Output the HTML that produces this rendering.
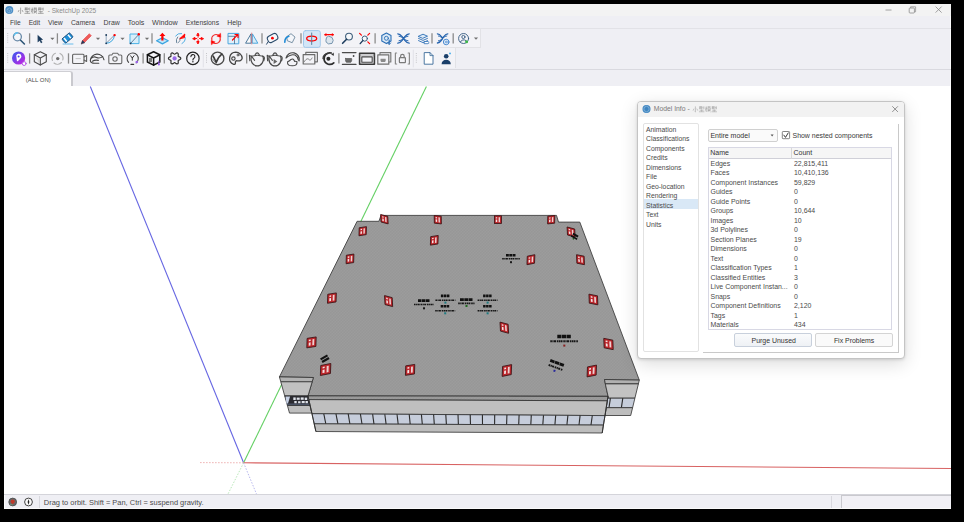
<!DOCTYPE html>
<html><head><meta charset="utf-8"><style>
*{margin:0;padding:0;box-sizing:border-box}
html,body{width:964px;height:522px;overflow:hidden;background:#000;font-family:"Liberation Sans",sans-serif}
.a{position:absolute}
.t{position:absolute;white-space:nowrap;line-height:1}
svg{position:absolute;left:0;top:0;overflow:visible}
</style></head><body>
<div class="a" style="left:4px;top:4px;width:947px;height:505px;background:#efeff4;border:1px solid #fbfbfb"></div>
<div class="a" style="left:4px;top:4px;width:947px;height:12px;background:#f3f3f3"></div>
<div class="a" style="left:4px;top:86px;width:947px;height:408px;background:#fff"></div>
<div class="a" style="left:4px;top:28px;width:947px;height:1px;background:#e2e2e7"></div>
<div class="a" style="left:5px;top:29px;width:475.5px;height:19.3px;background:#f3f3f7;border-right:1px solid #e2e2e6;border-bottom:1px solid #e2e2e6"></div>
<div class="a" style="left:5px;top:48.3px;width:451px;height:19.7px;background:#f3f3f7;border-right:1px solid #e2e2e6"></div>
<div class="a" style="left:4px;top:68.6px;width:947px;height:1px;background:#d9d9df"></div>
<div class="a" style="left:4px;top:71px;width:69px;height:15px;background:#fff;border-top:1px solid #cfcfd4;border-right:2px solid #c9c9ce;border-top-right-radius:3px"></div>
<div class="a" style="left:4px;top:493.5px;width:947px;height:1px;background:#d4d4da"></div>
<div class="a" style="left:4px;top:508px;width:947px;height:1px;background:#fafafa"></div>
<div class="a" style="left:39.2px;top:496px;width:1px;height:12px;background:#d8d8de"></div>
<div class="a" style="left:830.8px;top:496px;width:1px;height:12px;background:#d8d8de"></div>
<div class="a" style="left:841px;top:495px;width:110px;height:13px;background:#f1f0f5;border-top:1px solid #c9c9ce;border-left:1px solid #c9c9ce"></div>
<svg width="964" height="522"><circle cx="12.7" cy="502" r="3.9" fill="#6a6a6a" stroke="#4a4a4a" stroke-width="0.8"/><circle cx="12.7" cy="501.6" r="2.1" fill="#c03a2a"/><path d="M11.6 502.8l1.1 1.8 1.1-1.8" fill="#c03a2a"/><path d="M10 504.2c0.8 0.5 1.6 0.6 2.7 0.6" stroke="#7fae7f" stroke-width="0.6" fill="none"/>
<circle cx="28.5" cy="502" r="3.9" fill="#fafafa" stroke="#444" stroke-width="1"/><path d="M28.5 499.2l0.9 2.8-0.9 2.8-0.9-2.8z" fill="#222"/></svg>
<div class="t" style="left:10.1px;top:20.00px;font-size:6.6px;color:#404040;">File</div>
<div class="t" style="left:28.7px;top:20.00px;font-size:6.6px;color:#404040;">Edit</div>
<div class="t" style="left:48.1px;top:20.00px;font-size:6.8px;color:#404040;">View</div>
<div class="t" style="left:71.0px;top:20.00px;font-size:6.75px;color:#404040;">Camera</div>
<div class="t" style="left:103.6px;top:20.00px;font-size:6.94px;color:#404040;">Draw</div>
<div class="t" style="left:127.8px;top:19.00px;font-size:7.07px;color:#404040;">Tools</div>
<div class="t" style="left:152.1px;top:19.00px;font-size:7.2px;color:#404040;">Window</div>
<div class="t" style="left:185.8px;top:20.00px;font-size:6.8px;color:#404040;">Extensions</div>
<div class="t" style="left:227.2px;top:20.00px;font-size:6.9px;color:#404040;">Help</div>
<svg width="964" height="522"><circle cx="9.3" cy="10.1" r="4" fill="#4a8cc4"/><path d="M7 9.2l2.3-1.3 2.3 1.3v2.4l-2.3 1.3-2.3-1.3z" fill="none" stroke="#9cc4e4" stroke-width="0.6"/><path d="M7 9.2l2.3 1.3 2.3-1.3M9.3 10.5v2.4" fill="none" stroke="#9cc4e4" stroke-width="0.5"/></svg>
<div class="t" style="left:17.4px;top:8px;font-size:6.5px;color:#8c8c8c"><span style="display:inline-block;width:28.5px"></span> - SketchUp 2025</div>
<svg width="964" height="522"><path d="M885.5 10h6" stroke="#8a8a8a" stroke-width="0.8"/><rect x="909.2" y="8" width="5.2" height="5" fill="none" stroke="#8a8a8a" stroke-width="0.8" rx="0.8"/><path d="M910.6 8v-1.2h5v5h-1.2" fill="none" stroke="#8a8a8a" stroke-width="0.7"/><path d="M935.6 6.6l6 6M941.6 6.6l-6 6" stroke="#8a8a8a" stroke-width="0.8"/></svg>
<svg width="964" height="522"><path d="M20.60 7.60L20.60 13.60M20.60 13.60L19.88 13.00M19.10 10.00L18.08 12.10M22.10 10.00L23.12 12.10M24.62 8.08L27.92 8.08M24.62 9.40L27.92 9.40M25.64 7.60L25.22 10.60M26.84 7.60L26.84 10.60M28.64 7.90L28.64 9.88M29.72 7.60L29.72 10.60M25.22 11.68L29.42 11.68M27.32 10.90L27.32 13.30M24.44 13.36L30.20 13.36M31.16 9.40L33.32 9.40M32.24 7.60L32.24 13.60M32.24 9.70L31.16 12.10M33.56 8.20L36.92 8.20M34.52 7.60L34.52 8.80M35.96 7.60L35.96 8.80M34.04 9.28h2.52v1.92h-2.52zM33.56 11.92L36.92 11.92M35.24 11.20L33.92 13.60M35.36 12.10L36.92 13.60M38.06 8.08L41.36 8.08M38.06 9.40L41.36 9.40M39.08 7.60L38.66 10.60M40.28 7.60L40.28 10.60M42.08 7.90L42.08 9.88M43.16 7.60L43.16 10.60M38.66 11.68L42.86 11.68M40.76 10.90L40.76 13.30M37.88 13.36L43.64 13.36" stroke="#8a8a8a" stroke-width="0.7" fill="none"/></svg>
<div class="t" style="left:25.7px;top:77.00px;font-size:6.0px;color:#4a4a4a;">(ALL ON)</div>
<div class="t" style="left:43.8px;top:499.00px;font-size:7.46px;color:#4a4a4a;">Drag to orbit. Shift = Pan, Ctrl = suspend gravity.</div>
<svg width="964" height="522" viewBox="0 0 964 522" fill="none" stroke-linecap="round" stroke-linejoin="round">
<rect x="7.2" y="33" width="1" height="1" fill="#c4c4c8" stroke="none"/><rect x="7.2" y="35.2" width="1" height="1" fill="#c4c4c8" stroke="none"/><rect x="7.2" y="37.400000000000006" width="1" height="1" fill="#c4c4c8" stroke="none"/><rect x="7.2" y="39.60000000000001" width="1" height="1" fill="#c4c4c8" stroke="none"/><rect x="7.2" y="41.80000000000001" width="1" height="1" fill="#c4c4c8" stroke="none"/>
<rect x="7.2" y="53" width="1" height="1" fill="#c4c4c8" stroke="none"/><rect x="7.2" y="55.2" width="1" height="1" fill="#c4c4c8" stroke="none"/><rect x="7.2" y="57.400000000000006" width="1" height="1" fill="#c4c4c8" stroke="none"/><rect x="7.2" y="59.60000000000001" width="1" height="1" fill="#c4c4c8" stroke="none"/><rect x="7.2" y="61.80000000000001" width="1" height="1" fill="#c4c4c8" stroke="none"/>
<circle cx="17.4" cy="36.8" r="4" stroke="#6a8aa8" stroke-width="1.3" fill="#f4f6fa"/><path d="M14.2 35.2a4 4 0 0 1 3.2-2.4" stroke="#5bc0ef" stroke-width="1.4"/><line x1="20.6" y1="40.3" x2="24.4" y2="44" stroke="#2c5576" stroke-width="1.6"/>
<line x1="29.6" y1="33.3" x2="29.6" y2="43.6" stroke="#8c8c8c" stroke-width="1.3" stroke-linecap="butt"/>
<path d="M38 35.6l4.6 3.9-2 0.4 1.5 2.4-1 0.6-1.4-2.5-1.6 1.4z" fill="#18385a" stroke="#18385a" stroke-width="0.5"/>
<path d="M50.3 37.800000000000004h4.2l-2.1 2.2z" fill="#707070" stroke="none"/>
<line x1="57.4" y1="33.3" x2="57.4" y2="43.6" stroke="#8c8c8c" stroke-width="1.3" stroke-linecap="butt"/>
<g transform="rotate(-40 67.5 38)"><rect x="62.5" y="35.2" width="10" height="5.6" rx="0.8" fill="#1d8fd8" stroke="#1d4d7a" stroke-width="0.9"/><rect x="64" y="35.8" width="1.5" height="4.4" fill="#fff" stroke="none"/><rect x="69.2" y="35.8" width="1.5" height="4.4" fill="#fff" stroke="none"/></g><line x1="63" y1="44" x2="73" y2="44" stroke="#5ab7ea" stroke-width="0.9"/>
<path d="M81.5 43.5l1-3 6.8-6.8 2 2-6.8 6.8z" fill="#ef5a5a" stroke="#e04545" stroke-width="0.6"/><path d="M81.3 43.7l1.2-3.2 2 2z" fill="#1d3a5a" stroke="#1d3a5a" stroke-width="0.5"/>
<path d="M95.9 37.800000000000004h4.2l-2.1 2.2z" fill="#707070" stroke="none"/>
<path d="M106.2 35v8" stroke="#8aa0b8" stroke-width="0.9"/><line x1="106.2" y1="43.3" x2="114.4" y2="35.2" stroke="#6a8098" stroke-width="0.8"/><path d="M106.2 43.3a8 8 0 0 0 8.2-8" stroke="#3ea8e0" stroke-width="1"/><circle cx="106.2" cy="35" r="0.9" fill="#1d3a5a" stroke="none"/><circle cx="106.2" cy="43.3" r="0.9" fill="#1d3a5a" stroke="none"/><circle cx="114.6" cy="35.1" r="1.2" fill="#f00" stroke="none"/>
<path d="M120.4 37.800000000000004h4.2l-2.1 2.2z" fill="#707070" stroke="none"/>
<rect x="130.4" y="34" width="8.6" height="9.6" fill="#d8eefa" stroke="#4ab2e6" stroke-width="1"/><line x1="130.6" y1="43.4" x2="138.8" y2="34.4" stroke="#4a6a88" stroke-width="0.8"/><circle cx="130.6" cy="43.4" r="0.9" fill="#1d3a5a" stroke="none"/><circle cx="138.8" cy="34.3" r="1.2" fill="#f00" stroke="none"/>
<path d="M144.9 37.800000000000004h4.2l-2.1 2.2z" fill="#707070" stroke="none"/>
<line x1="152" y1="33.3" x2="152" y2="43.6" stroke="#8c8c8c" stroke-width="1.3" stroke-linecap="butt"/>
<path d="M156.6 40.8l5.8-3.1 5.8 3.1-5.8 3.1z" fill="#c4e6f8" stroke="#3aa4e0" stroke-width="1.3"/><path d="M162.4 32.8l-3 3.2h1.9v4.6h2.2v-4.6h1.9z" fill="#f00" stroke="none"/>
<path d="M175.6 36a6 6 0 0 1 6-2.5" stroke="#3da6e0" stroke-width="0.9"/><path d="M176.5 42.5a6 6 0 0 1 1.2-5.5" stroke="#5a7890" stroke-width="0.9"/><path d="M182 43.5a6 6 0 0 0 3.2-6" stroke="#3da6e0" stroke-width="0.9"/><path d="M178 43a5 5 0 0 0 2.2-5" stroke="#5a7890" stroke-width="0.8"/><path d="M180 38.5l4.8-4.5-0.3 3.2z" fill="#f00" stroke="#f00" stroke-width="1"/>
<path d="M198.1 33.4l1 2h-2zM198.1 43.6l1-2h-2zM193 38.5l2-1v2zM203.2 38.5l-2-1v2z" fill="#f00" stroke="#f00" stroke-width="1"/><path d="M198.1 35v7M194.6 38.5h7" stroke="#f00" stroke-width="0.9"/><circle cx="198.1" cy="38.5" r="1" fill="#fff" stroke="none"/>
<path d="M211.9 40.2A4.4 4.4 0 0 1 218.6 35.3" stroke="#f03030" stroke-width="1.1"/><path d="M220.1 37.8A4.4 4.4 0 0 1 213.4 42.7" stroke="#f03030" stroke-width="1.1"/><path d="M220.6 33.6l0.2 3.8-3.6-1.2z" fill="#f00" stroke="#f00" stroke-width="0.5"/><path d="M211.4 44.4l-0.2-3.8 3.6 1.2z" fill="#f00" stroke="#f00" stroke-width="0.5"/>
<rect x="228.4" y="33.4" width="10.4" height="10.4" fill="#dff0fa" stroke="#4aa6de" stroke-width="1"/><path d="M228.6 36.3h6.5M234.5 36.4v7.2" stroke="#4a6a88" stroke-width="0.8"/><path d="M232.5 40l4.8-4.8M235 34.6h3v3" stroke="#f00" stroke-width="1.2"/>
<path d="M250.8 34.2l-5.2 9h5.2z" fill="#fafafa" stroke="#3a6a90" stroke-width="0.9"/><path d="M252.6 34.2l5.2 9h-5.2z" fill="#d8ecf8" stroke="#3aa0dc" stroke-width="0.9"/><line x1="251.7" y1="33" x2="251.7" y2="44" stroke="#f05050" stroke-width="0.6" stroke-dasharray="1 0.8"/>
<line x1="262" y1="33.3" x2="262" y2="43.6" stroke="#8c8c8c" stroke-width="1.3" stroke-linecap="butt"/>
<g transform="rotate(-28 272.6 38)"><rect x="267.4" y="34.6" width="10.4" height="6.8" rx="2.6" fill="#f6f8fb" stroke="#2a4a6a" stroke-width="1"/></g><circle cx="272.4" cy="38.2" r="1.4" fill="#f00" stroke="none"/><path d="M268.2 41.6l-1.6 2.6" stroke="#2a4a6a" stroke-width="1"/>
<path d="M287 36.5l4-2.8 4 3.4-2.8 5.6-4.5-1.8z" fill="#f4f6fa" stroke="#5a7890" stroke-width="0.8"/><path d="M284.8 42.2c0-3 1.5-5.3 4-6" stroke="#1e8ad6" stroke-width="1.6"/>
<line x1="301" y1="33.3" x2="301" y2="43.6" stroke="#8c8c8c" stroke-width="1.3" stroke-linecap="butt"/>
<rect x="303.5" y="30.6" width="16.8" height="16.8" rx="2" fill="#d3e6f7" stroke="#9cc4e8" stroke-width="0.9"/><ellipse cx="311.7" cy="38.6" rx="5" ry="2.4" stroke="#f00" stroke-width="1.3"/><line x1="311.7" y1="33" x2="311.7" y2="44.5" stroke="#5a7e9c" stroke-width="1"/>
<path d="M326 40l0.5-2.5 2-1.3 3.5 1.2 1.2 3-1.2 3-3.5 0.5-2-1.5z" fill="#dde6ee" stroke="#6a8aa6" stroke-width="0.9"/><path d="M325 34.6h8.2" stroke="#f00" stroke-width="1.2"/><path d="M324.6 34.6l1.6-1.1v2.2zM333.6 34.6l-1.6-1.1v2.2z" fill="#f00" stroke="#f00" stroke-width="0.5"/>
<circle cx="349" cy="36.6" r="3.4" fill="#f6f8fa" stroke="#3e5e7c" stroke-width="1.1"/><line x1="346.6" y1="39.2" x2="342.6" y2="43.3" stroke="#1d3d5e" stroke-width="1.6"/>
<circle cx="364.8" cy="38.6" r="2.6" fill="#f6f8fa" stroke="#3e5e7c" stroke-width="1"/><line x1="362.8" y1="40.6" x2="360.2" y2="43.6" stroke="#1d3d5e" stroke-width="1.4"/><path d="M359.6 33.4l1.8 1.8M369.6 33.4l-1.8 1.8M369.6 43.6l-1.8-1.8" stroke="#f00" stroke-width="1.2"/>
<line x1="375.1" y1="33.3" x2="375.1" y2="43.6" stroke="#8c8c8c" stroke-width="1.3" stroke-linecap="butt"/>
<path d="M386.4 33l4.6 2.6v5.4l-4.6 2.6-4.6-2.6v-5.4z" fill="#dbe9f6" stroke="#2c6fb6" stroke-width="1.1"/><circle cx="386.4" cy="38.3" r="2" stroke="#2c6fb6" stroke-width="0.9"/><path d="M389.2 40v4" stroke="#2c6fb6" stroke-width="1.2"/><path d="M387.8 43l1.4 1.6 1.4-1.6" stroke="#2c6fb6" stroke-width="0.9"/>
<path d="M397.8 33.8c3 0 4.2 3.2 5.7 4.4 1.5-1.2 2.7-4.4 5.7-4.4M397.8 43.2c3 0 4.2-3.2 5.7-4.4 1.5 1.2 2.7 4.4 5.7 4.4" stroke="#2463ae" stroke-width="1.3"/><path d="M399 36.2c1.8 0.2 2.8 1.2 4.5 2.3 1.7-1.1 2.7-2.1 4.5-2.3M399 40.8c1.8-0.2 2.8-1.2 4.5-2.3 1.7 1.1 2.7 2.1 4.5 2.3" stroke="#2463ae" stroke-width="1"/>
<path d="M418.5 36.2l4.5-2 4.5 2-4.5 2z" fill="#dce9f6" stroke="#2c6fb6" stroke-width="0.9"/><path d="M418.5 38.4l4.5 2 4.5-2M418.5 40.6l4.5 2 4.5-2" stroke="#2c6fb6" stroke-width="0.9"/><path d="M424.5 41.5h3.5l1.2 1.1-1.2 1.1h-3.5z" fill="#fff" stroke="#2c6fb6" stroke-width="0.8"/>
<line x1="432" y1="33.3" x2="432" y2="43.6" stroke="#8c8c8c" stroke-width="1.3" stroke-linecap="butt"/>
<path d="M437.4 33.8c2.8 0 3.8 3 5.2 4.2 1.4-1.2 2.4-4.2 5.2-4.2M437.4 43c2.8 0 3.8-3 5.2-4.2" stroke="#2463ae" stroke-width="1.3"/><path d="M438.4 36c1.6 0.2 2.6 1.2 4.2 2.2 1.6-1 2.6-2 4.2-2.2M438.4 40.8c1.6-0.2 2.6-1.2 4.2-2.2" stroke="#2463ae" stroke-width="0.9"/><circle cx="446.2" cy="42" r="2.8" fill="#eaf2fa" stroke="#4a8ad0" stroke-width="1"/><circle cx="446.2" cy="42" r="1" stroke="#4a8ad0" stroke-width="0.7"/>
<line x1="453.2" y1="33.3" x2="453.2" y2="43.6" stroke="#8c8c8c" stroke-width="1.3" stroke-linecap="butt"/>
<circle cx="463.6" cy="38.5" r="5" stroke="#355a80" stroke-width="0.9"/><circle cx="463.4" cy="37" r="1.6" stroke="#355a80" stroke-width="0.9"/><path d="M460.4 42a3.4 3.4 0 0 1 5.6-1.4" stroke="#355a80" stroke-width="0.9"/><circle cx="466.6" cy="41.8" r="1.5" fill="#3cb44a" stroke="none"/>
<path d="M473.9 37.6h4.2l-2.1 2.2z" fill="#707070" stroke="none"/>
<defs><linearGradient id="pg" x1="0" y1="0" x2="1" y2="1"><stop offset="0" stop-color="#2f5cf0"/><stop offset="1" stop-color="#d21ee0"/></linearGradient></defs><circle cx="18.6" cy="58" r="6.6" fill="url(#pg)" stroke="none"/><path d="M16.2 55.4a2.7 2.7 0 0 1 5.2 1c0 1.6-1.6 2.6-2.8 4.2l-1.6 1z" fill="#fff" stroke="none"/><circle cx="18.6" cy="56.6" r="1" fill="#4a3af0" stroke="none"/><circle cx="24.2" cy="63.6" r="1.9" fill="#fff" stroke="#b455e8" stroke-width="1"/>
<line x1="29.6" y1="53.3" x2="29.6" y2="63.6" stroke="#8c8c8c" stroke-width="1.3" stroke-linecap="butt"/>
<path d="M40.3 51.8l6 3v7l-6 3.2-6-3.2v-7z" stroke="#4a4a4a" stroke-width="1.1"/><path d="M34.3 54.8l6 3.2 6-3.2M40.3 58v7" stroke="#4a4a4a" stroke-width="1.1"/><path d="M35.5 57l3.8 2.2v4.6" fill="#d8d8d8" stroke="none"/>
<path d="M52.4 60.5a5.5 5.5 0 0 1 3-7.3M60 53.4a5.5 5.5 0 0 1 2.8 6.5M61.5 62.5a5.5 5.5 0 0 1-7.5 0.5" stroke="#b0b0b0" stroke-width="1.1"/><circle cx="57.7" cy="58.6" r="1.7" fill="#6a6a6a" stroke="none"/>
<line x1="68.5" y1="53.3" x2="68.5" y2="63.6" stroke="#8c8c8c" stroke-width="1.3" stroke-linecap="butt"/>
<rect x="72.6" y="54.3" width="11.4" height="9.2" rx="1" stroke="#606060" stroke-width="1.1"/><path d="M84 57l2.6-1.4v5.8L84 60" stroke="#606060" stroke-width="1.1"/><path d="M76 58.6h4.4" stroke="#b4b4b4" stroke-width="0.8"/>
<path d="M90.3 60.6A6.9 6.8 0 0 1 104 59.8M90.3 60.6Q90.8 63.3 94.5 63.3H98.8M91.2 58.3Q93.6 56 96.5 57.4T102.8 56.6M92.4 61.2Q95 59.6 98.4 60.4" stroke="#454545" stroke-width="1.1"/>
<path d="M108.8 56v6.6a1 1 0 0 0 1 1h11a1 1 0 0 0 1-1V56a1 1 0 0 0-1-1h-2l-1.2-1.8h-4.6L111.8 55h-2a1 1 0 0 0-1 1z" stroke="#6a6a6a" stroke-width="1.1"/><circle cx="115" cy="59" r="2.2" stroke="#6a6a6a" stroke-width="1.1"/>
<path d="M128.6 62.4a5.6 5.6 0 1 1 7.6 0.5" stroke="#4a4a4a" stroke-width="1.1"/><path d="M130.6 55.8l1.7 2.2 1.7-2.2M132.3 58v2.2" stroke="#333" stroke-width="1"/><path d="M131 64.4h2.6" stroke="#333" stroke-width="1.2"/><circle cx="136.8" cy="62" r="1.3" fill="#9a62e8" stroke="none"/>
<line x1="143.1" y1="53.3" x2="143.1" y2="63.6" stroke="#8c8c8c" stroke-width="1.3" stroke-linecap="butt"/>
<path d="M153.6 51.8l6.2 3v7.2l-6.2 3.2-6.2-3.2v-7.2z" stroke="#141414" stroke-width="1.5"/><path d="M147.4 54.8l6.2 3.2 6.2-3.2M153.6 58v7.2" stroke="#141414" stroke-width="1.5"/><rect x="149" y="58" width="3" height="4" fill="#7a7a7a" stroke="none"/><path d="M158.9 61v3.5" stroke="#9a62e8" stroke-width="1.1"/><circle cx="158.9" cy="64.4" r="1" fill="#9a62e8" stroke="none"/>
<line x1="164.3" y1="53.3" x2="164.3" y2="63.6" stroke="#8c8c8c" stroke-width="1.3" stroke-linecap="butt"/>
<polygon points="180.80,58.40 180.58,59.03 179.99,59.55 179.25,59.91 178.61,60.19 178.24,60.50 178.15,60.98 178.23,61.67 178.29,62.49 178.13,63.26 177.70,63.77 177.04,63.89 176.30,63.64 175.62,63.18 175.06,62.77 174.60,62.60 174.14,62.77 173.58,63.18 172.90,63.64 172.16,63.89 171.50,63.77 171.07,63.26 170.91,62.49 170.97,61.67 171.05,60.98 170.96,60.50 170.59,60.19 169.95,59.91 169.21,59.55 168.62,59.03 168.40,58.40 168.62,57.77 169.21,57.25 169.95,56.89 170.59,56.61 170.96,56.30 171.05,55.82 170.97,55.13 170.91,54.31 171.07,53.54 171.50,53.03 172.16,52.91 172.90,53.16 173.58,53.62 174.14,54.03 174.60,54.20 175.06,54.03 175.62,53.62 176.30,53.16 177.04,52.91 177.70,53.03 178.13,53.54 178.29,54.31 178.23,55.13 178.15,55.82 178.24,56.30 178.61,56.61 179.25,56.89 179.99,57.25 180.58,57.77" stroke="#333" stroke-width="1.2"/><circle cx="174.6" cy="58.4" r="2.1" fill="#9a6be8" stroke="none"/>
<circle cx="192.9" cy="58.4" r="6.2" stroke="#222" stroke-width="1.2"/><path d="M190.9 56.6a2 2 0 1 1 2.8 1.8c-0.6 0.3-0.8 0.8-0.8 1.5" stroke="#222" stroke-width="1.1"/><circle cx="192.9" cy="61.8" r="0.7" fill="#222" stroke="none"/>
<line x1="203.3" y1="50" x2="203.3" y2="67" stroke="#e2e2e8" stroke-width="1"/><rect x="206.0" y="53" width="1" height="1" fill="#c4c4c8" stroke="none"/><rect x="206.0" y="55.2" width="1" height="1" fill="#c4c4c8" stroke="none"/><rect x="206.0" y="57.400000000000006" width="1" height="1" fill="#c4c4c8" stroke="none"/><rect x="206.0" y="59.60000000000001" width="1" height="1" fill="#c4c4c8" stroke="none"/><rect x="206.0" y="61.80000000000001" width="1" height="1" fill="#c4c4c8" stroke="none"/>
<circle cx="217.6" cy="58.4" r="6.3" stroke="#4a4a4a" stroke-width="1.4"/><path d="M213.2 56.2c1.2 1.8 2 4.2 3 6.4 1.2-3.4 3-6.4 5.6-8.4" stroke="#3a3a3a" stroke-width="1.6"/><path d="M212.8 59.2c0.8 1.4 1.6 2.4 2.6 3.2" stroke="#777" stroke-width="0.8"/>
<path d="M235.8 52.1a6.3 6.3 0 0 0-2.1 12.2c1.3 0.3 1.9-0.6 1.7-1.7-0.3-1.2 0.6-2 1.8-1.8 2.1 0.4 4.6 0 5-2.7a6.5 6.5 0 0 0-6.4-6z" stroke="#454545" stroke-width="1.3"/><circle cx="233.4" cy="58.6" r="1.7" stroke="#454545" stroke-width="1.1"/><circle cx="238" cy="55" r="1" stroke="#454545" stroke-width="0.9"/>
<line x1="246.7" y1="53.3" x2="246.7" y2="63.6" stroke="#8c8c8c" stroke-width="1.3" stroke-linecap="butt"/>
<path d="M251.6 56.1C249.6 61.0 253.0 65.9 257.2 65.9C261.4 65.9 264.8 61.0 262.8 56.1" stroke="#4a4a4a" stroke-width="1.2"/><path d="M251.79999999999998 56.1Q257.2 54.3 262.59999999999997 56.1" stroke="#4a4a4a" stroke-width="1"/><path d="M255.0 54.9Q257.2 50.9 259.4 54.9" stroke="#4a4a4a" stroke-width="1.1"/><path d="M252.0 56.9L249.39999999999998 55.3L249.79999999999998 60.7M252.2 57.1l2.4 3.2M262.8 56.3Q265.4 56.5 263.8 60.7" stroke="#4a4a4a" stroke-width="1.1"/>
<path d="M269.4 56.1C267.4 61.0 270.8 65.9 275 65.9C279.2 65.9 282.6 61.0 280.6 56.1" stroke="#4a4a4a" stroke-width="1.2"/><path d="M269.6 56.1Q275 54.3 280.4 56.1" stroke="#4a4a4a" stroke-width="1"/><path d="M272.8 54.9Q275 50.9 277.2 54.9" stroke="#4a4a4a" stroke-width="1.1"/><path d="M269.8 56.9L267.2 55.3L267.6 60.7M270 57.1l2.4 3.2M280.6 56.3Q283.2 56.5 281.6 60.7" stroke="#4a4a4a" stroke-width="1.1"/><path d="M273.6 58.9v5l3.8-2.5z" fill="#666" stroke="none"/>
<path d="M286 58A6.6 6.6 0 1 1 299.2 61M286 58Q288 56 290.5 55.2Q292.3 54.3 295 55Q297.6 56.3 298.4 60.2M287.6 61.8Q287 65.8 292.3 65.8Q297.4 65.8 297 61.8Q295.6 61 294.6 61.4Q293.6 58.2 291 59.4Q289.8 60.8 287.6 61.8z" stroke="#454545" stroke-width="1.1"/>
<rect x="305.8" y="52.4" width="11.6" height="9.4" stroke="#707070" stroke-width="1.2"/><rect x="303.2" y="54.6" width="11.6" height="9.4" fill="#f3f3f7" stroke="#6a6a6a" stroke-width="1.2"/><path d="M304 62c2-3 3.5-4 5-2.5s2 0 3-1.5" stroke="#7a7a7a" stroke-width="1"/>
<path d="M331.2 53a5.8 5.8 0 1 0 2.6 9.8" stroke="#2e2e2e" stroke-width="1.7"/><path d="M323 58.5a5 5 0 0 1 5-5" stroke="#3a3a3a" stroke-width="1.3"/><path d="M333.6 52.6l0.4 3.2-2.8-1z" fill="#333" stroke="none"/><circle cx="328.4" cy="58.8" r="2" fill="#2a2a2a" stroke="none"/>
<line x1="338.9" y1="53.3" x2="338.9" y2="63.6" stroke="#8c8c8c" stroke-width="1.3" stroke-linecap="butt"/>
<path d="M342.4 52.6h13.6M342.4 64.4h13.6" stroke="#4a4a4a" stroke-width="1.2"/><path d="M345.6 58.5h6c0.4 1.8 0 3-0.8 3.8h-4.4c-0.8-0.8-1.2-2-0.8-3.8z" fill="#6a6a6a" stroke="#4a4a4a" stroke-width="0.6"/><circle cx="353.6" cy="56" r="0.9" fill="#444" stroke="none"/>
<rect x="359.6" y="53.2" width="14.8" height="11" stroke="#3a3a3a" stroke-width="1.6"/><rect x="361.8" y="56.9" width="10.4" height="5.4" stroke="#444" stroke-width="1.1"/><path d="M359.8 55h14.6" stroke="#777" stroke-width="0.6"/>
<rect x="380" y="52.6" width="10.8" height="9.4" stroke="#7a7a7a" stroke-width="1.2"/><rect x="377.8" y="54.8" width="11" height="9.4" fill="#f3f3f7" stroke="#707070" stroke-width="1.2"/><path d="M380.6 58.8h5c0.4 1.6 0 2.6-0.7 3.2h-3.6c-0.7-0.6-1.1-1.6-0.7-3.2z" fill="#8a8a8a" stroke="none"/>
<path d="M396.6 53h-1.2v11h1.2M408.2 53h1.2v11h-1.2" stroke="#8a8a8a" stroke-width="1.2"/><rect x="399.4" y="57.6" width="6" height="5" rx="0.6" stroke="#7a7a7a" stroke-width="1.2"/><path d="M400.6 57.6v-1.4a1.8 1.8 0 0 1 3.6 0v1.4" stroke="#7a7a7a" stroke-width="1.2"/>
<line x1="413.3" y1="50" x2="413.3" y2="67" stroke="#e2e2e8" stroke-width="1"/><rect x="415.8" y="53" width="1" height="1" fill="#c4c4c8" stroke="none"/><rect x="415.8" y="55.2" width="1" height="1" fill="#c4c4c8" stroke="none"/><rect x="415.8" y="57.400000000000006" width="1" height="1" fill="#c4c4c8" stroke="none"/><rect x="415.8" y="59.60000000000001" width="1" height="1" fill="#c4c4c8" stroke="none"/><rect x="415.8" y="61.80000000000001" width="1" height="1" fill="#c4c4c8" stroke="none"/>
<path d="M424.6 52.6h5.4l3 3v8.6h-8.4z" fill="#fff" stroke="#3a6a98" stroke-width="0.9"/><path d="M430 52.6v3h3" stroke="#3a6a98" stroke-width="0.8"/>
<circle cx="446.2" cy="56.2" r="2.3" fill="#1b3f6a" stroke="none"/><path d="M441.6 64.2c0-2.6 2-4.4 4.6-4.4s4.6 1.8 4.6 4.4z" fill="#1b3f6a" stroke="none"/><circle cx="450" cy="53.4" r="0.9" fill="#3aa8ea" stroke="none"/>
</svg>
<svg width="964" height="522" viewBox="0 0 964 522">
<line x1="243.6" y1="462.8" x2="90.3" y2="86.5" stroke="#6666e2" stroke-width="1.1"/>
<line x1="243.6" y1="462.8" x2="426.4" y2="86.5" stroke="#64d064" stroke-width="1.1"/>
<line x1="243.6" y1="462.8" x2="951" y2="468.5" stroke="#d86262" stroke-width="1.1"/>
<line x1="243.6" y1="462.8" x2="200" y2="462.6" stroke="#eeb0b0" stroke-width="1" stroke-dasharray="1.5 1.5"/>
<line x1="243.6" y1="462.8" x2="228" y2="494" stroke="#b8e8b8" stroke-width="1" stroke-dasharray="1.5 1.5"/>
<line x1="243.6" y1="462.8" x2="256.5" y2="494" stroke="#b8b8ee" stroke-width="1" stroke-dasharray="1.5 1.5"/>
<defs><pattern id="rt" width="3" height="3" patternUnits="userSpaceOnUse"><rect width="3" height="3" fill="#9c9c9c"/><rect width="1.5" height="1.5" fill="#979797"/><rect x="1.5" y="1.5" width="1.5" height="1.5" fill="#979797"/></pattern></defs>
<polygon points="357.1,221.3 378.9,221.3 381.0,215.4 556.5,215.4 558.5,222.1 579.8,222.1 639.3,380.1 604.5,379.5 608.0,396.3 308.0,395.9 313.4,377.5 279.4,376.9" fill="url(#rt)" stroke="#3a3a3a" stroke-width="0.85" stroke-linejoin="round" />
<polygon points="279.4,376.9 313.4,377.5 312.2,381.8 280.8,381.8" fill="#b2b2b2" stroke="#2e2e2e" stroke-width="0.8" stroke-linejoin="round" />
<polygon points="280.8,381.8 312.2,381.8 308.0,395.9 284.7,395.9" fill="#c1c1c1" stroke="#2e2e2e" stroke-width="0.8" stroke-linejoin="round" />
<polygon points="284.7,395.9 308.0,395.9 310.1,405.5 287.4,405.5" fill="#2a2a30" stroke="#2e2e2e" stroke-width="0.8" stroke-linejoin="round" />
<path d="M285.5 396.6h4.6l-2.2 7.2h-1.4z" fill="#c6d0e4"/><rect x="293.3" y="397.4" width="2.4" height="2.6" fill="#dfe3ea"/><rect x="296.7" y="397.6" width="3" height="2.2" fill="#dfe3ea"/><rect x="300.7" y="397.4" width="3" height="2.4" fill="#dfe3ea"/><rect x="304.7" y="397.6" width="2.4" height="2.4" fill="#dfe3ea"/><rect x="307.9" y="397.4" width="2.6" height="2.6" fill="#dfe3ea"/><rect x="294.3" y="401" width="2.4" height="2.4" fill="#dfe3ea"/><rect x="298.1" y="401.2" width="2.4" height="2.2" fill="#dfe3ea"/><rect x="301.7" y="401" width="3" height="2.2" fill="#dfe3ea"/><rect x="305.5" y="401" width="2.4" height="2.4" fill="#dfe3ea"/><rect x="309.1" y="401" width="2.8" height="2.4" fill="#dfe3ea"/><path d="M286.8 403.6H309.7L310.1 405.5H287.4z" fill="#4a5264"/>
<polygon points="287.4,405.5 310.1,405.5 311.8,413.1 289.5,413.1" fill="#bebebe" stroke="#2e2e2e" stroke-width="0.8" stroke-linejoin="round" />
<polygon points="604.5,379.5 639.3,380.1 638.4,383.9 605.3,383.9" fill="#b0b0b0" stroke="#2e2e2e" stroke-width="0.8" stroke-linejoin="round" />
<polygon points="605.3,383.9 638.4,383.9 634.9,398.2 608.5,398.2" fill="#c2c2c2" stroke="#2e2e2e" stroke-width="0.8" stroke-linejoin="round" />
<polygon points="607.7,398.2 634.9,398.2 632.6,407.7 606.2,407.7" fill="#c6cdda" stroke="#2e2e2e" stroke-width="0.8" stroke-linejoin="round" />
<line x1="610.4" y1="398.2" x2="609.0" y2="407.7" stroke="#2a2a2a" stroke-width="1.1"/>
<line x1="622.8" y1="398.2" x2="621.4" y2="407.7" stroke="#2a2a2a" stroke-width="1.1"/>
<polygon points="606.2,407.7 632.6,407.7 630.7,415.5 605.0,415.5" fill="#bdbdbd" stroke="#2e2e2e" stroke-width="0.8" stroke-linejoin="round" />
<polygon points="308.0,395.9 608.0,396.3 607.3,400.8 308.8,399.6" fill="url(#rt)" stroke="#2e2e2e" stroke-width="0.8" stroke-linejoin="round" />
<polygon points="308.8,399.6 607.3,400.8 605.0,415.6 312.0,413.7" fill="#bfbfbf" stroke="#2e2e2e" stroke-width="0.8" stroke-linejoin="round" />
<polygon points="312.0,413.7 605.0,415.6 603.4,425.1 314.2,423.8" fill="#c6cddb" stroke="#2e2e2e" stroke-width="0.8" stroke-linejoin="round" />
<line x1="323.8" y1="413.8" x2="325.8" y2="423.9" stroke="#2b2b2b" stroke-width="1.1"/>
<line x1="336.0" y1="413.9" x2="337.9" y2="423.9" stroke="#2b2b2b" stroke-width="1.1"/>
<line x1="348.2" y1="413.9" x2="349.9" y2="424.0" stroke="#2b2b2b" stroke-width="1.1"/>
<line x1="360.4" y1="414.0" x2="362.0" y2="424.0" stroke="#2b2b2b" stroke-width="1.1"/>
<line x1="372.6" y1="414.1" x2="374.0" y2="424.1" stroke="#2b2b2b" stroke-width="1.1"/>
<line x1="384.8" y1="414.2" x2="386.1" y2="424.1" stroke="#2b2b2b" stroke-width="1.1"/>
<line x1="397.0" y1="414.3" x2="398.2" y2="424.2" stroke="#2b2b2b" stroke-width="1.1"/>
<line x1="409.2" y1="414.3" x2="410.2" y2="424.2" stroke="#2b2b2b" stroke-width="1.1"/>
<line x1="421.4" y1="414.4" x2="422.3" y2="424.3" stroke="#2b2b2b" stroke-width="1.1"/>
<line x1="433.6" y1="414.5" x2="434.3" y2="424.3" stroke="#2b2b2b" stroke-width="1.1"/>
<line x1="445.8" y1="414.6" x2="446.4" y2="424.4" stroke="#2b2b2b" stroke-width="1.1"/>
<line x1="458.0" y1="414.7" x2="458.4" y2="424.5" stroke="#2b2b2b" stroke-width="1.1"/>
<line x1="470.2" y1="414.7" x2="470.5" y2="424.5" stroke="#2b2b2b" stroke-width="1.1"/>
<line x1="482.4" y1="414.8" x2="482.5" y2="424.6" stroke="#2b2b2b" stroke-width="1.1"/>
<line x1="494.7" y1="414.9" x2="494.6" y2="424.6" stroke="#2b2b2b" stroke-width="1.1"/>
<line x1="506.9" y1="415.0" x2="506.6" y2="424.7" stroke="#2b2b2b" stroke-width="1.1"/>
<line x1="519.1" y1="415.0" x2="518.7" y2="424.7" stroke="#2b2b2b" stroke-width="1.1"/>
<line x1="531.3" y1="415.1" x2="530.8" y2="424.8" stroke="#2b2b2b" stroke-width="1.1"/>
<line x1="543.5" y1="415.2" x2="542.8" y2="424.8" stroke="#2b2b2b" stroke-width="1.1"/>
<line x1="555.7" y1="415.3" x2="554.9" y2="424.9" stroke="#2b2b2b" stroke-width="1.1"/>
<line x1="567.9" y1="415.4" x2="566.9" y2="424.9" stroke="#2b2b2b" stroke-width="1.1"/>
<line x1="580.1" y1="415.4" x2="579.0" y2="425.0" stroke="#2b2b2b" stroke-width="1.1"/>
<line x1="592.3" y1="415.5" x2="591.0" y2="425.0" stroke="#2b2b2b" stroke-width="1.1"/>
<polygon points="314.2,423.8 603.4,425.1 602.2,433.0 315.9,431.5" fill="#bdbdbd" stroke="#2e2e2e" stroke-width="0.8" stroke-linejoin="round" />
<line x1="308" y1="395.9" x2="315.9" y2="431.5" stroke="#2e2e2e" stroke-width="0.9"/>
<line x1="608" y1="396.3" x2="602.2" y2="433" stroke="#2e2e2e" stroke-width="0.9"/>
<g transform="translate(384.4,219.2) rotate(-3.0) skewY(18.0)"><rect x="-3.50" y="-3.75" width="7" height="7.5" fill="#bc262b" stroke="#3a1214" stroke-width="0.8"/><rect x="-2.10" y="-2.40" width="1.40" height="1.20" fill="#f4e4e4"/><rect x="-2.10" y="-0.15" width="1.40" height="2.40" fill="#f4e4e4"/><rect x="0.70" y="-2.40" width="1.40" height="4.80" fill="#ecd0d0"/></g>
<g transform="translate(437.8,219.7) rotate(-1.2) skewY(7.2)"><rect x="-3.50" y="-3.85" width="7" height="7.7" fill="#bc262b" stroke="#3a1214" stroke-width="0.8"/><rect x="-2.10" y="-2.46" width="1.40" height="1.23" fill="#f4e4e4"/><rect x="-2.10" y="-0.15" width="1.40" height="2.46" fill="#f4e4e4"/><rect x="0.70" y="-2.46" width="1.40" height="4.93" fill="#ecd0d0"/></g>
<g transform="translate(497.9,219.7) rotate(0.0) skewY(0.0)"><rect x="-3.50" y="-3.85" width="7" height="7.7" fill="#bc262b" stroke="#3a1214" stroke-width="0.8"/><rect x="-2.10" y="-2.46" width="1.40" height="1.23" fill="#f4e4e4"/><rect x="-2.10" y="-0.15" width="1.40" height="2.46" fill="#f4e4e4"/><rect x="0.70" y="-2.46" width="1.40" height="4.93" fill="#ecd0d0"/></g>
<g transform="translate(551.2,219.7) rotate(1.2) skewY(-7.2)"><rect x="-3.50" y="-3.85" width="7" height="7.7" fill="#bc262b" stroke="#3a1214" stroke-width="0.8"/><rect x="-2.10" y="-2.46" width="1.40" height="1.23" fill="#f4e4e4"/><rect x="-2.10" y="-0.15" width="1.40" height="2.46" fill="#f4e4e4"/><rect x="0.70" y="-2.46" width="1.40" height="4.93" fill="#ecd0d0"/></g>
<g transform="translate(362.7,231.2) rotate(1.8) skewY(-10.8)"><rect x="-3.60" y="-4.00" width="7.2" height="8" fill="#bc262b" stroke="#3a1214" stroke-width="0.8"/><rect x="-2.16" y="-2.56" width="1.44" height="1.28" fill="#f4e4e4"/><rect x="-2.16" y="-0.16" width="1.44" height="2.56" fill="#f4e4e4"/><rect x="0.72" y="-2.56" width="1.44" height="5.12" fill="#ecd0d0"/></g>
<g transform="translate(434.3,240.3) rotate(1.8) skewY(-10.8)"><rect x="-3.75" y="-4.25" width="7.5" height="8.5" fill="#bc262b" stroke="#3a1214" stroke-width="0.8"/><rect x="-2.25" y="-2.72" width="1.50" height="1.36" fill="#f4e4e4"/><rect x="-2.25" y="-0.17" width="1.50" height="2.72" fill="#f4e4e4"/><rect x="0.75" y="-2.72" width="1.50" height="5.44" fill="#ecd0d0"/></g>
<g transform="translate(571.1,232) rotate(-3.0) skewY(18.0)"><rect x="-3.75" y="-4.00" width="7.5" height="8" fill="#bc262b" stroke="#3a1214" stroke-width="0.8"/><rect x="-2.25" y="-2.56" width="1.50" height="1.28" fill="#f4e4e4"/><rect x="-2.25" y="-0.16" width="1.50" height="2.56" fill="#f4e4e4"/><rect x="0.75" y="-2.56" width="1.50" height="5.12" fill="#ecd0d0"/></g>
<g transform="translate(350,258.9) rotate(1.8) skewY(-10.8)"><rect x="-3.75" y="-4.25" width="7.5" height="8.5" fill="#bc262b" stroke="#3a1214" stroke-width="0.8"/><rect x="-2.25" y="-2.72" width="1.50" height="1.36" fill="#f4e4e4"/><rect x="-2.25" y="-0.17" width="1.50" height="2.72" fill="#f4e4e4"/><rect x="0.75" y="-2.72" width="1.50" height="5.44" fill="#ecd0d0"/></g>
<g transform="translate(530.9,259.7) rotate(2.2) skewY(-13.5)"><rect x="-3.75" y="-4.25" width="7.5" height="8.5" fill="#bc262b" stroke="#3a1214" stroke-width="0.8"/><rect x="-2.25" y="-2.72" width="1.50" height="1.36" fill="#f4e4e4"/><rect x="-2.25" y="-0.17" width="1.50" height="2.72" fill="#f4e4e4"/><rect x="0.75" y="-2.72" width="1.50" height="5.44" fill="#ecd0d0"/></g>
<g transform="translate(580.5,259.7) rotate(-2.2) skewY(13.5)"><rect x="-3.75" y="-4.25" width="7.5" height="8.5" fill="#bc262b" stroke="#3a1214" stroke-width="0.8"/><rect x="-2.25" y="-2.72" width="1.50" height="1.36" fill="#f4e4e4"/><rect x="-2.25" y="-0.17" width="1.50" height="2.72" fill="#f4e4e4"/><rect x="0.75" y="-2.72" width="1.50" height="5.44" fill="#ecd0d0"/></g>
<g transform="translate(331.9,298.1) rotate(1.8) skewY(-10.8)"><rect x="-4.25" y="-4.50" width="8.5" height="9" fill="#bc262b" stroke="#3a1214" stroke-width="0.8"/><rect x="-2.55" y="-2.88" width="1.70" height="1.44" fill="#f4e4e4"/><rect x="-2.55" y="-0.18" width="1.70" height="2.88" fill="#f4e4e4"/><rect x="0.85" y="-2.88" width="1.70" height="5.76" fill="#ecd0d0"/></g>
<g transform="translate(388.6,301.1) rotate(-3.0) skewY(18.0)"><rect x="-3.75" y="-4.50" width="7.5" height="9" fill="#bc262b" stroke="#3a1214" stroke-width="0.8"/><rect x="-2.25" y="-2.88" width="1.50" height="1.44" fill="#f4e4e4"/><rect x="-2.25" y="-0.18" width="1.50" height="2.88" fill="#f4e4e4"/><rect x="0.75" y="-2.88" width="1.50" height="5.76" fill="#ecd0d0"/></g>
<g transform="translate(593.4,299.5) rotate(-2.2) skewY(13.5)"><rect x="-4.25" y="-4.50" width="8.5" height="9" fill="#bc262b" stroke="#3a1214" stroke-width="0.8"/><rect x="-2.55" y="-2.88" width="1.70" height="1.44" fill="#f4e4e4"/><rect x="-2.55" y="-0.18" width="1.70" height="2.88" fill="#f4e4e4"/><rect x="0.85" y="-2.88" width="1.70" height="5.76" fill="#ecd0d0"/></g>
<g transform="translate(504.3,327.7) rotate(-3.0) skewY(18.0)"><rect x="-4.00" y="-4.50" width="8" height="9" fill="#bc262b" stroke="#3a1214" stroke-width="0.8"/><rect x="-2.40" y="-2.88" width="1.60" height="1.44" fill="#f4e4e4"/><rect x="-2.40" y="-0.18" width="1.60" height="2.88" fill="#f4e4e4"/><rect x="0.80" y="-2.88" width="1.60" height="5.76" fill="#ecd0d0"/></g>
<g transform="translate(311.5,342.4) rotate(1.8) skewY(-10.8)"><rect x="-4.50" y="-4.75" width="9" height="9.5" fill="#bc262b" stroke="#3a1214" stroke-width="0.8"/><rect x="-2.70" y="-3.04" width="1.80" height="1.52" fill="#f4e4e4"/><rect x="-2.70" y="-0.19" width="1.80" height="3.04" fill="#f4e4e4"/><rect x="0.90" y="-3.04" width="1.80" height="6.08" fill="#ecd0d0"/></g>
<g transform="translate(608.5,344) rotate(-2.2) skewY(13.5)"><rect x="-4.50" y="-4.75" width="9" height="9.5" fill="#bc262b" stroke="#3a1214" stroke-width="0.8"/><rect x="-2.70" y="-3.04" width="1.80" height="1.52" fill="#f4e4e4"/><rect x="-2.70" y="-0.19" width="1.80" height="3.04" fill="#f4e4e4"/><rect x="0.90" y="-3.04" width="1.80" height="6.08" fill="#ecd0d0"/></g>
<g transform="translate(325.6,369.5) rotate(2.2) skewY(-13.5)"><rect x="-5.00" y="-5.00" width="10" height="10" fill="#bc262b" stroke="#3a1214" stroke-width="0.8"/><rect x="-3.00" y="-3.20" width="2.00" height="1.60" fill="#f4e4e4"/><rect x="-3.00" y="-0.20" width="2.00" height="3.20" fill="#f4e4e4"/><rect x="1.00" y="-3.20" width="2.00" height="6.40" fill="#ecd0d0"/></g>
<g transform="translate(410.1,369.9) rotate(1.8) skewY(-10.8)"><rect x="-4.50" y="-4.75" width="9" height="9.5" fill="#bc262b" stroke="#3a1214" stroke-width="0.8"/><rect x="-2.70" y="-3.04" width="1.80" height="1.52" fill="#f4e4e4"/><rect x="-2.70" y="-0.19" width="1.80" height="3.04" fill="#f4e4e4"/><rect x="0.90" y="-3.04" width="1.80" height="6.08" fill="#ecd0d0"/></g>
<g transform="translate(506.9,370.5) rotate(2.2) skewY(-13.5)"><rect x="-4.50" y="-5.00" width="9" height="10" fill="#bc262b" stroke="#3a1214" stroke-width="0.8"/><rect x="-2.70" y="-3.20" width="1.80" height="1.60" fill="#f4e4e4"/><rect x="-2.70" y="-0.20" width="1.80" height="3.20" fill="#f4e4e4"/><rect x="0.90" y="-3.20" width="1.80" height="6.40" fill="#ecd0d0"/></g>
<g transform="translate(591.8,371) rotate(2.2) skewY(-13.5)"><rect x="-4.50" y="-5.00" width="9" height="10" fill="#bc262b" stroke="#3a1214" stroke-width="0.8"/><rect x="-2.70" y="-3.20" width="1.80" height="1.60" fill="#f4e4e4"/><rect x="-2.70" y="-0.20" width="1.80" height="3.20" fill="#f4e4e4"/><rect x="0.90" y="-3.20" width="1.80" height="6.40" fill="#ecd0d0"/></g>
<g transform="rotate(0 511 257.9)"><line x1="506.0" y1="255.3" x2="516.0" y2="255.3" stroke="#101010" stroke-width="2.38" stroke-dasharray="2.83 0.5"/><line x1="502.2" y1="258.7" x2="519.8" y2="258.7" stroke="#151515" stroke-width="1.6" stroke-dasharray="1.6 0.5 1.2 0.4 2 0.8"/><rect x="510.0" y="261.2" width="2" height="2" fill="#1a1a1a"/></g>
<g transform="rotate(0 424 303)"><line x1="418.0" y1="300.6" x2="430.0" y2="300.6" stroke="#101010" stroke-width="2.63" stroke-dasharray="3.50 0.5"/><line x1="414.0" y1="304.5" x2="434.0" y2="304.5" stroke="#151515" stroke-width="1.6" stroke-dasharray="1.6 0.5 1.2 0.4 2 0.8"/><rect x="423.0" y="307.3" width="2" height="2" fill="#1a1a1a"/></g>
<g transform="rotate(0 445.4 298.3)"><line x1="440.9" y1="295.9" x2="449.9" y2="295.9" stroke="#101010" stroke-width="2.63" stroke-dasharray="2.50 0.5"/><line x1="435.4" y1="300.3" x2="455.4" y2="300.3" stroke="#151515" stroke-width="1.6" stroke-dasharray="1.6 0.5 1.2 0.4 2 0.8"/><rect x="444.4" y="301.6" width="2" height="2" fill="#1f7a80"/></g>
<g transform="rotate(0 445.2 308.7)"><line x1="440.7" y1="306.2" x2="449.7" y2="306.2" stroke="#101010" stroke-width="2.63" stroke-dasharray="2.50 0.5"/><line x1="435.2" y1="310.7" x2="455.2" y2="310.7" stroke="#151515" stroke-width="1.6" stroke-dasharray="1.6 0.5 1.2 0.4 2 0.8"/><rect x="444.2" y="312.3" width="2" height="2" fill="#1f7a80"/></g>
<g transform="rotate(0 466.5 302)"><line x1="460.0" y1="299.6" x2="473.0" y2="299.6" stroke="#101010" stroke-width="2.72" stroke-dasharray="3.83 0.5"/><line x1="458.2" y1="303.4" x2="474.8" y2="303.4" stroke="#151515" stroke-width="1.6" stroke-dasharray="1.6 0.5 1.2 0.4 2 0.8"/><rect x="465.5" y="305.0" width="2" height="2" fill="#1f6a1f"/></g>
<g transform="rotate(0 487.6 298.3)"><line x1="483.1" y1="295.9" x2="492.1" y2="295.9" stroke="#101010" stroke-width="2.63" stroke-dasharray="2.50 0.5"/><line x1="477.6" y1="300.3" x2="497.6" y2="300.3" stroke="#151515" stroke-width="1.6" stroke-dasharray="1.6 0.5 1.2 0.4 2 0.8"/><rect x="486.6" y="301.6" width="2" height="2" fill="#1f7a80"/></g>
<g transform="rotate(0 487.6 308.7)"><line x1="483.1" y1="306.2" x2="492.1" y2="306.2" stroke="#101010" stroke-width="2.63" stroke-dasharray="2.50 0.5"/><line x1="477.6" y1="310.7" x2="497.6" y2="310.7" stroke="#151515" stroke-width="1.6" stroke-dasharray="1.6 0.5 1.2 0.4 2 0.8"/><rect x="486.6" y="312.3" width="2" height="2" fill="#1f7a80"/></g>
<g transform="rotate(0 564.3 338.5)"><line x1="557.3" y1="336.5" x2="571.3" y2="336.5" stroke="#101010" stroke-width="3.40" stroke-dasharray="4.17 0.5"/><line x1="550.3" y1="341.3" x2="578.3" y2="341.3" stroke="#151515" stroke-width="2.0" stroke-dasharray="1.6 0.5 1.2 0.4 2 0.8"/><rect x="563.3" y="344.6" width="2" height="2" fill="#8a2020"/></g>
<g transform="rotate(20 556.5 365.2)"><line x1="549.0" y1="362.9" x2="564.0" y2="362.9" stroke="#101010" stroke-width="2.89" stroke-dasharray="4.50 0.5"/><line x1="549.0" y1="367.6" x2="564.0" y2="367.6" stroke="#151515" stroke-width="2.0" stroke-dasharray="1.6 0.5 1.2 0.4 2 0.8"/><rect x="555.5" y="370.2" width="2" height="2" fill="#2a2a9a"/></g>
<g transform="translate(325,359) rotate(-30)"><rect x="-4" y="-3" width="8" height="2.2" fill="#111"/><rect x="-4" y="0" width="8" height="2.2" fill="#111"/></g>
<g transform="translate(575,236) rotate(30)"><rect x="-3" y="-2" width="6" height="2" fill="#111"/><rect x="-3.5" y="1" width="7" height="1.5" fill="#111"/><rect x="-0.7" y="2.5" width="1.4" height="1.5" fill="#1a5a1a"/></g>
</svg>
<div class="a" style="left:637px;top:101px;width:267.5px;height:257.5px;background:#fff;border:1px solid #c4c4c4;border-radius:4px;box-shadow:0 5px 18px rgba(0,0,0,0.14),0 1px 3px rgba(0,0,0,0.12)"></div>
<div class="a" style="left:638px;top:102px;width:265.5px;height:15px;background:#f2f2f2;border-radius:3px 3px 0 0"></div>
<svg width="964" height="522"><circle cx="646.5" cy="109" r="4" fill="#3d84c0"/><path d="M644 107.5l2.5-1.3 2.5 1.3v3l-2.5 1.3-2.5-1.3z" fill="none" stroke="#a8cbe6" stroke-width="0.6"/><path d="M892.3 106.3l5.6 5.6M897.9 106.3l-5.6 5.6" stroke="#777" stroke-width="0.8"/></svg>
<div class="t" style="left:653.8px;top:106.1px;font-size:6.8px;color:#7a7a7a">Model Info - </div>
<div class="a" style="left:643.4px;top:123.3px;width:55.6px;height:229.1px;border:1px solid #e2e2e2;border-radius:2px;background:#fff"></div>
<div class="a" style="left:644.4px;top:199px;width:53.6px;height:9.5px;background:#d9e8f6"></div>
<div class="t" style="left:646.0px;top:127.00px;font-size:6.8px;color:#4a4a4a;">Animation</div>
<div class="t" style="left:646.0px;top:136.00px;font-size:6.8px;color:#4a4a4a;">Classifications</div>
<div class="t" style="left:646.0px;top:146.00px;font-size:6.8px;color:#4a4a4a;">Components</div>
<div class="t" style="left:646.0px;top:155.00px;font-size:6.8px;color:#4a4a4a;">Credits</div>
<div class="t" style="left:646.0px;top:165.00px;font-size:6.8px;color:#4a4a4a;">Dimensions</div>
<div class="t" style="left:646.0px;top:174.00px;font-size:6.8px;color:#4a4a4a;">File</div>
<div class="t" style="left:646.0px;top:184.00px;font-size:6.8px;color:#4a4a4a;">Geo-location</div>
<div class="t" style="left:646.0px;top:193.00px;font-size:6.8px;color:#4a4a4a;">Rendering</div>
<div class="t" style="left:646.0px;top:203.00px;font-size:6.8px;color:#4a4a4a;">Statistics</div>
<div class="t" style="left:646.0px;top:212.00px;font-size:6.8px;color:#4a4a4a;">Text</div>
<div class="t" style="left:646.0px;top:222.00px;font-size:6.8px;color:#4a4a4a;">Units</div>
<div class="a" style="left:897.6px;top:123.7px;width:1.2px;height:229px;background:#c9c9c9"></div>
<div class="a" style="left:702.6px;top:351.6px;width:196px;height:1.2px;background:#c9c9c9"></div>
<div class="a" style="left:707.5px;top:128.8px;width:70.8px;height:13.5px;border:1px solid #d0d0d0;border-radius:2px;background:#fafafa"></div>
<div class="t" style="left:710.4px;top:132.00px;font-size:7.0px;color:#333;">Entire model</div>
<svg width="964" height="522"><path d="M770.6 134.6h3l-1.5 1.8z" fill="#555"/><rect x="782.3" y="131.5" width="7.3" height="7.2" fill="#fff" stroke="#666" stroke-width="0.8" rx="0.8"/><path d="M783.6 134.8l1.9 2.6 2.9-4.8" fill="none" stroke="#222" stroke-width="0.9"/></svg>
<div class="t" style="left:792.5px;top:133.00px;font-size:6.96px;color:#3a3a3a;">Show nested components</div>
<div class="a" style="left:708.3px;top:146.5px;width:184.2px;height:183px;border:1px solid #d8d8e4;background:#fff"></div>
<div class="a" style="left:709.3px;top:147.5px;width:182.2px;height:11px;background:#f6f6f6;border-bottom:1px solid #d0d0d8"></div>
<div class="a" style="left:791px;top:147.5px;width:1px;height:11px;background:#d8d8d8"></div>
<div class="t" style="left:710.3px;top:149.00px;font-size:7.0px;color:#333;">Name</div>
<div class="t" style="left:793.5px;top:149.00px;font-size:7.0px;color:#333;">Count</div>
<div class="t" style="left:710.5px;top:161.00px;font-size:6.95px;color:#4a4a4a;">Edges</div>
<div class="t" style="left:794.0px;top:161.00px;font-size:6.95px;color:#4a4a4a;">22,815,411</div>
<div class="t" style="left:710.5px;top:170.00px;font-size:6.95px;color:#4a4a4a;">Faces</div>
<div class="t" style="left:794.0px;top:170.00px;font-size:6.95px;color:#4a4a4a;">10,410,136</div>
<div class="t" style="left:710.5px;top:180.00px;font-size:6.95px;color:#4a4a4a;">Component Instances</div>
<div class="t" style="left:794.0px;top:180.00px;font-size:6.95px;color:#4a4a4a;">59,829</div>
<div class="t" style="left:710.5px;top:189.00px;font-size:6.95px;color:#4a4a4a;">Guides</div>
<div class="t" style="left:794.0px;top:189.00px;font-size:6.95px;color:#4a4a4a;">0</div>
<div class="t" style="left:710.5px;top:199.00px;font-size:6.95px;color:#4a4a4a;">Guide Points</div>
<div class="t" style="left:794.0px;top:199.00px;font-size:6.95px;color:#4a4a4a;">0</div>
<div class="t" style="left:710.5px;top:208.00px;font-size:6.95px;color:#4a4a4a;">Groups</div>
<div class="t" style="left:794.0px;top:208.00px;font-size:6.95px;color:#4a4a4a;">10,644</div>
<div class="t" style="left:710.5px;top:218.00px;font-size:6.95px;color:#4a4a4a;">Images</div>
<div class="t" style="left:794.0px;top:218.00px;font-size:6.95px;color:#4a4a4a;">10</div>
<div class="t" style="left:710.5px;top:227.00px;font-size:6.95px;color:#4a4a4a;">3d Polylines</div>
<div class="t" style="left:794.0px;top:227.00px;font-size:6.95px;color:#4a4a4a;">0</div>
<div class="t" style="left:710.5px;top:237.00px;font-size:6.95px;color:#4a4a4a;">Section Planes</div>
<div class="t" style="left:794.0px;top:237.00px;font-size:6.95px;color:#4a4a4a;">19</div>
<div class="t" style="left:710.5px;top:246.00px;font-size:6.95px;color:#4a4a4a;">Dimensions</div>
<div class="t" style="left:794.0px;top:246.00px;font-size:6.95px;color:#4a4a4a;">0</div>
<div class="t" style="left:710.5px;top:256.00px;font-size:6.95px;color:#4a4a4a;">Text</div>
<div class="t" style="left:794.0px;top:256.00px;font-size:6.95px;color:#4a4a4a;">0</div>
<div class="t" style="left:710.5px;top:265.00px;font-size:6.95px;color:#4a4a4a;">Classification Types</div>
<div class="t" style="left:794.0px;top:265.00px;font-size:6.95px;color:#4a4a4a;">1</div>
<div class="t" style="left:710.5px;top:275.00px;font-size:6.95px;color:#4a4a4a;">Classified Entities</div>
<div class="t" style="left:794.0px;top:275.00px;font-size:6.95px;color:#4a4a4a;">3</div>
<div class="t" style="left:710.5px;top:284.00px;font-size:6.95px;color:#4a4a4a;">Live Component Instan...</div>
<div class="t" style="left:794.0px;top:284.00px;font-size:6.95px;color:#4a4a4a;">0</div>
<div class="t" style="left:710.5px;top:294.00px;font-size:6.95px;color:#4a4a4a;">Snaps</div>
<div class="t" style="left:794.0px;top:294.00px;font-size:6.95px;color:#4a4a4a;">0</div>
<div class="t" style="left:710.5px;top:303.00px;font-size:6.95px;color:#4a4a4a;">Component Definitions</div>
<div class="t" style="left:794.0px;top:303.00px;font-size:6.95px;color:#4a4a4a;">2,120</div>
<div class="t" style="left:710.5px;top:313.00px;font-size:6.95px;color:#4a4a4a;">Tags</div>
<div class="t" style="left:794.0px;top:313.00px;font-size:6.95px;color:#4a4a4a;">1</div>
<div class="t" style="left:710.5px;top:322.00px;font-size:6.95px;color:#4a4a4a;">Materials</div>
<div class="t" style="left:794.0px;top:322.00px;font-size:6.95px;color:#4a4a4a;">434</div>
<div class="a" style="left:734.3px;top:333.2px;width:77.5px;height:13.8px;border:1px solid #c8d0dc;border-radius:2px;background:linear-gradient(#fafbfc,#eef1f5)"></div>
<div class="a" style="left:815.3px;top:333.2px;width:77.4px;height:13.8px;border:1px solid #d4d4d4;border-radius:2px;background:#fafafa"></div>
<div class="t" style="left:751.6px;top:338.00px;font-size:6.93px;color:#333;">Purge Unused</div>
<div class="t" style="left:833.9px;top:338.00px;font-size:6.93px;color:#333;">Fix Problems</div>
<svg width="964" height="522"><path d="M695.40 106.40L695.40 112.00M695.40 112.00L694.73 111.44M694.00 108.64L693.05 110.60M696.80 108.64L697.75 110.60M699.15 106.85L702.23 106.85M699.15 108.08L702.23 108.08M700.10 106.40L699.71 109.20M701.22 106.40L701.22 109.20M702.90 106.68L702.90 108.53M703.91 106.40L703.91 109.20M699.71 110.21L703.63 110.21M701.67 109.48L701.67 111.72M698.98 111.78L704.36 111.78M705.26 108.08L707.27 108.08M706.26 106.40L706.26 112.00M706.26 108.36L705.26 110.60M707.50 106.96L710.63 106.96M708.39 106.40L708.39 107.52M709.74 106.40L709.74 107.52M707.94 107.97h2.35v1.79h-2.35zM707.50 110.43L710.63 110.43M709.06 109.76L707.83 112.00M709.18 110.60L710.63 112.00M711.70 106.85L714.78 106.85M711.70 108.08L714.78 108.08M712.65 106.40L712.26 109.20M713.77 106.40L713.77 109.20M715.45 106.68L715.45 108.53M716.46 106.40L716.46 109.20M712.26 110.21L716.18 110.21M714.22 109.48L714.22 111.72M711.53 111.78L716.90 111.78" stroke="#9a9a9a" stroke-width="0.55" fill="none"/></svg></body></html>
